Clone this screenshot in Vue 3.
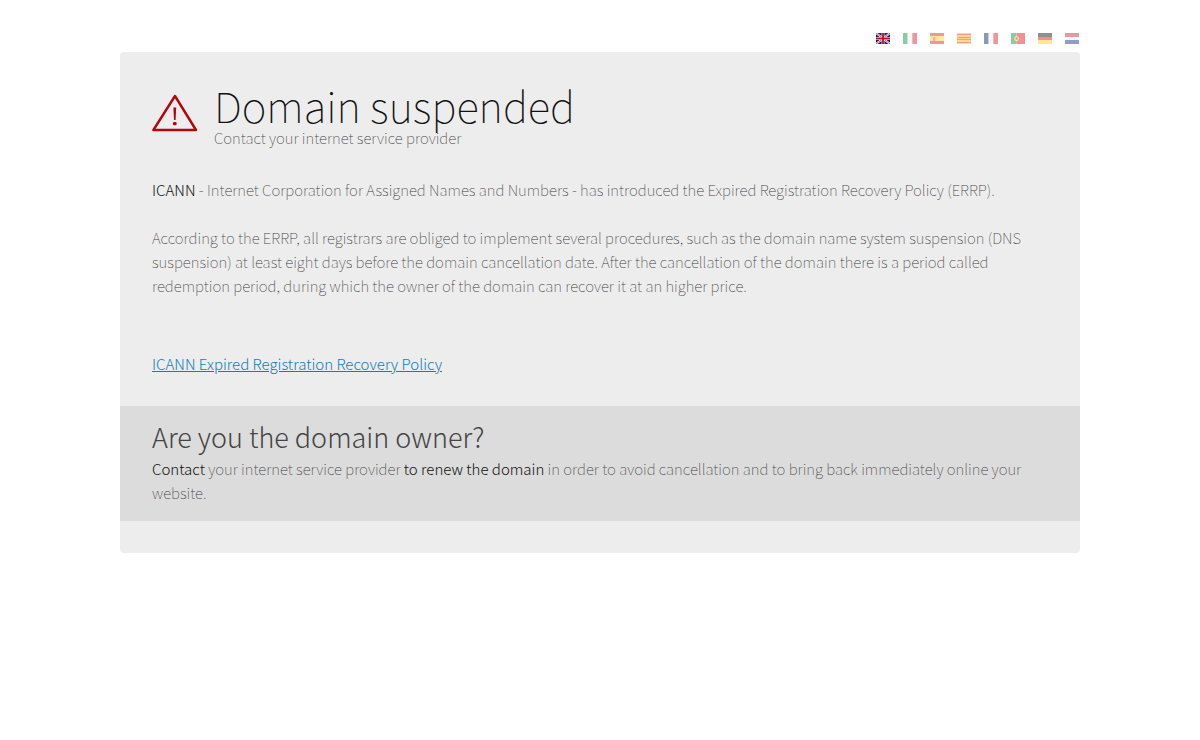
<template>
    <div class="page">
        <nav class="languages" aria-label="Language">
            <a
                v-for="flag in flags"
                :key="flag.code"
                href="#"
                class="flag"
                :class="{ active: flag.code === current }"
                :aria-label="flag.name"
                @click.prevent="current = flag.code"
            >
                <svg viewBox="0 0 15 11" width="14" height="11" preserveAspectRatio="none" aria-hidden="true">
                    <rect
                        v-for="(s, i) in flag.shapes"
                        :key="i"
                        :x="s[0]"
                        :y="s[1]"
                        :width="s[2]"
                        :height="s[3]"
                        :fill="s[4]"
                    />
                    <g v-if="flag.code === 'en'">
                        <path d="M0 0L15 11M15 0L0 11" stroke="#fff" stroke-width="2" />
                        <path d="M0 0L15 11M15 0L0 11" stroke="#c8304a" stroke-width="0.8" />
                        <path d="M7.5 0V11M0 5.5H15" stroke="#fff" stroke-width="3" />
                        <path d="M7.5 0V11M0 5.5H15" stroke="#c01034" stroke-width="2" />
                    </g>
                    <g v-if="flag.code === 'es'">
                        <rect x="3" y="4" width="3" height="4" fill="#d8703e" />
                        <path d="M2.5 4V8M6.5 4V8" stroke="#e9c08a" />
                    </g>
                    <g v-if="flag.code === 'pt'">
                        <circle cx="6" cy="5.5" r="2.5" fill="#f0d84a" />
                        <rect x="5" y="4" width="2" height="3" fill="#e8432b" />
                    </g>
                </svg>
            </a>
        </nav>

        <main class="card">
            <header class="heading">
                <svg class="warning" viewBox="0 0 46 38" width="46" height="38" aria-hidden="true">
                    <path
                        d="M23 2L44 36H1.4Z"
                        fill="none"
                        stroke="#b3060c"
                        stroke-width="2.4"
                        stroke-linejoin="round"
                    />
                    <path d="M21.4 13.5H24.2L23.6 26H22Z" fill="#b3060c" />
                    <rect x="21" y="28" width="3.6" height="3.2" rx="1" fill="#b3060c" />
                </svg>
                <div>
                    <h1>Domain suspended</h1>
                    <p class="subtitle">Contact your internet service provider</p>
                </div>
            </header>

            <section class="content">
                <p>
                    <strong>ICANN</strong> - Internet Corporation for Assigned Names and Numbers - has introduced the
                    Expired Registration Recovery Policy (ERRP).
                </p>
                <p>
                    According to the ERRP, all registrars are obliged to implement several procedures, such as the
                    domain name system suspension (DNS suspension) at least eight days before the domain cancellation
                    date. After the cancellation of the domain there is a period called redemption period, during which
                    the owner of the domain can recover it at an higher price.
                </p>
                <a href="#" class="policy">ICANN Expired Registration Recovery Policy</a>
            </section>

            <section class="owner">
                <h2>Are you the domain owner?</h2>
                <p>
                    <strong>Contact</strong> your internet service provider <strong>to renew the domain</strong> in
                    order to avoid cancellation and to bring back immediately online your website.
                </p>
            </section>
        </main>
    </div>
</template>

<script setup>
    import { ref } from 'vue';

    const current = ref('en');

    const vertical = (...colors) => colors.map((c, i) => [i * 5, 0, 5, 11, c]);

    // x, y, width, height, fill
    const flags = [
        { code: 'en', name: 'English', shapes: [[0, 0, 15, 11, '#14205c']] },
        { code: 'it', name: 'Italiano', shapes: vertical('#159a55', '#f4f4f4', '#e0303c') },
        {
            code: 'es',
            name: 'Español',
            shapes: [
                [0, 0, 15, 11, '#e0303c'],
                [0, 3, 15, 5, '#ffd83a']
            ]
        },
        {
            code: 'ca',
            name: 'Català',
            shapes: [
                [0, 0, 15, 11, '#ffb020'],
                ...[1, 4, 6, 9].map(y => [0, y, 15, 1, '#e0402c'])
            ]
        },
        { code: 'fr', name: 'Français', shapes: vertical('#1c2f86', '#f4f4f4', '#e0303c') },
        {
            code: 'pt',
            name: 'Português',
            shapes: [
                [0, 0, 6, 11, '#139a4c'],
                [6, 0, 9, 11, '#e8232b']
            ]
        },
        {
            code: 'de',
            name: 'Deutsch',
            shapes: [
                [0, 0, 15, 4, '#222222'],
                [0, 4, 15, 3, '#e0202c'],
                [0, 7, 15, 4, '#ffd320']
            ]
        },
        {
            code: 'nl',
            name: 'Nederlands',
            shapes: [
                [0, 0, 15, 4, '#d9303c'],
                [0, 4, 15, 3, '#f8f8f8'],
                [0, 7, 15, 4, '#20409a']
            ]
        }
    ];
</script>

<style>
    body {
        background: #fff;
    }
</style>

<style scoped>
    .page {
        width: 80%;
        margin: 0 auto;
        padding-top: 33px;
        font-family: 'Noto Sans CJK JP', sans-serif;
        font-size: 15px;
        font-weight: 100;
        line-height: 24px;
        color: #444;
    }

    h1,
    h2,
    p {
        margin: 0;
    }

    .languages {
        display: flex;
        justify-content: flex-end;
        gap: 13px;
        padding: 0 1px 8px;
    }

    .flag {
        display: block;
        line-height: 0;
        opacity: 0.5;
    }

    .flag.active {
        opacity: 1;
    }

    .card {
        padding: 30px 0 32px;
        background: #ededed;
        border-radius: 4px;
    }

    .heading {
        display: flex;
        gap: 16px;
        padding: 0 32px;
    }

    .warning {
        flex: none;
        margin-top: 12px;
    }

    h1 {
        margin-bottom: -2px;
        font-size: 42px;
        font-weight: 100;
        line-height: 46px;
        color: #111;
    }

    .content {
        padding: 28px 32px 30px;
    }

    .content p {
        margin-bottom: 24px;
    }

    .policy {
        display: inline-block;
        margin-top: 30px;
        font-weight: 300;
        color: #0f7fb8;
    }

    strong {
        font-weight: 300;
        color: #111;
    }

    .owner {
        padding: 11px 32px 16px;
        background: #dcdcdc;
    }

    h2 {
        font-size: 27px;
        font-weight: 300;
        line-height: 40px;
        color: #444;
    }
</style>
